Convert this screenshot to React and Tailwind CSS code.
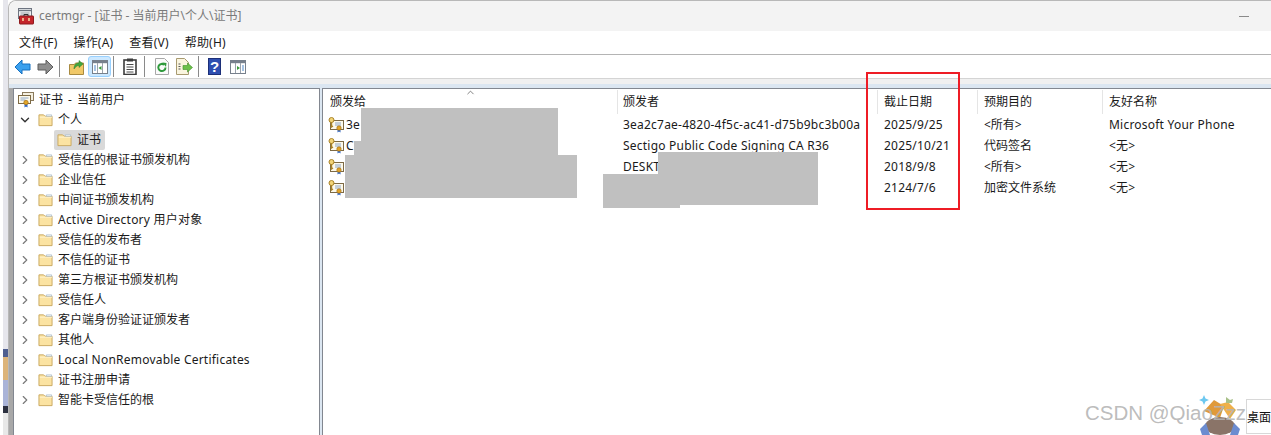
import React from 'react';
import { ChevronDown, ChevronRight, ChevronUp } from 'lucide-react';

const treeItems = [
  '受信任的根证书颁发机构',
  '企业信任',
  '中间证书颁发机构',
  'Active Directory 用户对象',
  '受信任的发布者',
  '不信任的证书',
  '第三方根证书颁发机构',
  '受信任人',
  '客户端身份验证证颁发者',
  '其他人',
  'Local NonRemovable Certificates',
  '证书注册申请',
  '智能卡受信任的根',
];

const rows = [
  { to: '3e', from: '3ea2c7ae-4820-4f5c-ac41-d75b9bc3b00a', date: '2025/9/25', purpose: '<所有>', name: 'Microsoft Your Phone' },
  { to: 'C', from: 'Sectigo Public Code Signing CA R36', date: '2025/10/21', purpose: '代码签名', name: '<无>' },
  { to: '', from: 'DESKT', date: '2018/9/8', purpose: '<所有>', name: '<无>' },
  { to: '', from: '', date: '2124/7/6', purpose: '加密文件系统', name: '<无>' },
];

const FolderIcon = () => (
  <svg width="15" height="14" viewBox="0 0 16 14" className="shrink-0">
    <path d="M1 1.5h5l1.5 1.5H15v10H1z" fill="#fbe3a2" stroke="#c9a860" />
    <path d="M2 4h13" stroke="#fff3cf" />
    <path d="M9 1.5h5.5V3H9z" fill="#fff" stroke="#9fb6c8" strokeWidth="0.7" />
  </svg>
);

const CertIcon = () => (
  <svg width="16" height="16" viewBox="0 0 16 16" className="shrink-0">
    <rect x="2.5" y="3.5" width="13" height="9" fill="#fdf9ea" stroke="#7d6a45" />
    <path d="M7 6h6M7 8h6M9 10h4" stroke="#8ca6c8" />
    <circle cx="3.5" cy="3" r="2.5" fill="#f2d477" stroke="#a98328" />
    <path d="M3.5 5v5l1.5-1" fill="none" stroke="#a98328" strokeWidth="1.4" />
    <path d="M9.5 12.5v3l1.5-1 1.500 1v-3" fill="#2f66c4" />
    <circle cx="11" cy="11" r="2.2" fill="#e2a526" stroke="#a8731a" strokeWidth="0.7" />
  </svg>
);

const StoreIcon = () => (
  <svg width="16" height="16" viewBox="0 0 16 16" className="shrink-0">
    <rect x="4.5" y="0.5" width="11" height="8" fill="#f4efe0" stroke="#8a7a5c" />
    <rect x="0.5" y="3.5" width="12" height="8" fill="#fdf9ea" stroke="#7d6a45" />
    <path d="M2.500 6h8M2.500 8h5" stroke="#8ca6c8" />
    <path d="M6.500 12v3.500l1.500-1 1.500 1V12" fill="#2f66c4" />
    <circle cx="8" cy="10.500" r="2.200" fill="#e2a526" stroke="#a8731a" strokeWidth="0.7" />
  </svg>
);

const ToolkitIcon = () => (
  <svg width="16" height="17" viewBox="0 0 16 17" className="shrink-0">
    <rect x="0.5" y="0.5" width="13" height="10" fill="#eef0f2" stroke="#6d7480" />
    <path d="M1 2.500h12" stroke="#6d7480" strokeWidth="1.4" />
    <path d="M2.500 5h9M2.500 7h9" stroke="#9aa0a8" />
    <rect x="1.500" y="8" width="14" height="8" rx="0.5" fill="#c4252b" stroke="#8f1a1e" />
    <path d="M6 8V6.500h4V8" fill="none" stroke="#333" />
    <path d="M5 10v3M11 10v3" stroke="#f5d0a0" strokeWidth="1.6" />
  </svg>
);

const Sep = () => <div className="h-[21px] w-px bg-[#8a8a8a]" />;

const ArrowIcon = ({ fill, stroke, flip }) => (
  <svg width="17" height="16" viewBox="0 0 17 16" className={flip ? 'shrink-0 -scale-x-100' : 'shrink-0'}>
    <path d="M8 1L1 8l7 7v-4h8V5H8z" fill={fill} stroke={stroke} />
  </svg>
);

const WindowIcon = ({ dark }) => (
  <svg width="16" height="14" viewBox="0 0 16 14" className="shrink-0">
    <rect x="0.5" y="0.5" width="15" height="13" fill="#fff" stroke="#77808c" />
    <path d="M1 2h14" stroke="#77808c" strokeWidth="2.4" />
    <path d="M5.500 3v10M10.500 3v10" stroke="#9aa2ac" />
    {dark ? (
      <>
        <path d="M7 6v4l3-2z" fill="#3a9a3a" />
        <path d="M12 6h2M12 8h2M12 10h2" stroke="#4c88c8" />
      </>
    ) : (
      <>
        <path d="M2 6h2M2 8h2M2 10h2" stroke="#4c88c8" />
        <path d="M9.500 6v4l-3-2z" fill="#3a9a3a" />
      </>
    )}
  </svg>
);

const Toolbar = () => (
  <div className="flex h-[23px] shrink-0 items-center bg-white">
    <div className="ml-[5px] flex w-[17px]"><ArrowIcon fill="#3aa0ee" stroke="#1670c0" /></div>
    <div className="ml-[6px] flex w-[17px]"><ArrowIcon fill="#8e8e8e" stroke="#5c5c5c" flip /></div>
    <div className="ml-[5px]"><Sep /></div>
    <svg width="15" height="16" viewBox="0 0 15 16" className="ml-[9px] shrink-0">
      <path d="M0.500 5.500h5l1-1.500h8v11.500h-14z" fill="#f0c868" stroke="#a88a40" />
      <path d="M5 10c0-4 2-6 5-6V1.500L14 5l-4 3.500V6.500c-2 0-3.500 1.500-5 3.500z" fill="#3fa83f" stroke="#2a7a2a" strokeWidth="0.5" />
    </svg>
    <div className="ml-[4px] flex h-[21px] w-[23px] items-center justify-center rounded-[3px] border border-[#99d1ff] bg-[#cce8ff]">
      <WindowIcon />
    </div>
    <div className="ml-[2px]"><Sep /></div>
    <svg width="14" height="17" viewBox="0 0 14 17" className="ml-[9px] shrink-0">
      <rect x="1" y="2" width="12" height="14.500" fill="#fff" stroke="#3c3c3c" strokeWidth="1.600" />
      <rect x="4" y="0.500" width="6" height="3" fill="#3c3c3c" />
      <path d="M3.500 6.500h7M3.500 9h7M3.500 11.500h7M3.500 14h7" stroke="#4c4c4c" />
    </svg>
    <div className="ml-[7px]"><Sep /></div>
    <svg width="14" height="17" viewBox="0 0 14 17" className="ml-[10px] shrink-0">
      <path d="M0.500 0.500h9l4 4v12h-13z" fill="#fbfbfb" stroke="#a8a8a8" />
      <path d="M10.500 9.500a3.600 3.600 0 1 1-1.200-2.700" fill="none" stroke="#2f9a3c" strokeWidth="2" />
      <path d="M7.500 4.500l4 .5-.5 4z" fill="#2f9a3c" />
    </svg>
    <svg width="17" height="17" viewBox="0 0 17 17" className="ml-[7px] shrink-0">
      <path d="M0.500 0.500h8l4 4v12h-12z" fill="#faf5df" stroke="#a89a70" />
      <path d="M2.500 6h2M2.500 8.500h2M2.500 11h2" stroke="#555" />
      <path d="M7 7.500h4.500V5l5 4.500-5 4.500v-2.500H7z" fill="#6cc04a" stroke="#3f8f2a" strokeWidth="0.600" />
    </svg>
    <div className="ml-[5px]"><Sep /></div>
    <div className="ml-[9px] flex h-[17px] w-[13px] items-center justify-center border border-[#1c2f78] bg-[#2f4fb0] font-['Liberation_Sans',sans-serif] text-[15px] leading-none font-bold text-white">?</div>
    <div className="ml-[9px]"><WindowIcon dark /></div>
  </div>
);

const TreeRow = ({ label }) => (
  <div className="flex h-5 items-center pl-[4px]">
    <ChevronRight size={14} strokeWidth={2} className="shrink-0 text-[#7a7a7a]" />
    <div className="ml-[6px]"><FolderIcon /></div>
    <span className={`ml-[5px] whitespace-nowrap ${/[A-Za-z]/.test(label) ? 'tracking-[0.22px]' : ''}`}>{label}</span>
  </div>
);

const Tree = () => (
  <div className="h-full w-[307px] shrink-0 border-t border-r border-l border-[#828790] bg-white pt-px">
    <div className="flex h-5 items-center pl-[4px]">
      <StoreIcon />
      <span className="ml-[5px] [word-spacing:2px]">证书 - 当前用户</span>
    </div>
    <div className="flex h-5 items-center pl-[4px]">
      <ChevronDown size={14} strokeWidth={2.4} className="shrink-0 text-[#333]" />
      <div className="ml-[6px]"><FolderIcon /></div>
      <span className="ml-[5px]">个人</span>
    </div>
    <div className="flex h-5 items-center pl-[40px]">
      <div className="flex h-5 w-[51px] items-center rounded-[2px] bg-[#d9d9d9] pl-[3px]">
        <FolderIcon />
        <span className="ml-[5px]">证书</span>
      </div>
    </div>
    {treeItems.map((label) => <TreeRow key={label} label={label} />)}
  </div>
);

const columns = ['w-[294px]', 'w-[260px]', 'w-[100px]', 'w-[125px]', 'flex-1'];
const headers = ['颁发给', '颁发者', '截止日期', '预期目的', '友好名称'];
const headerPad = ['pl-[7px]', 'border-l border-[#e5e5e5] pl-[5px]', 'border-l border-[#e5e5e5] pl-[6px]', 'border-l border-[#e5e5e5] pl-[6px]', 'border-l border-[#e5e5e5] pl-[6px]'];

const CertList = () => (
  <div className="relative h-full flex-1 border-t border-l border-[#828790] bg-white">
    <ChevronUp size={11} strokeWidth={1.6} className="absolute top-[-2px] left-[142px] text-[#555]" />
    <div className="flex h-[25px] pt-px">
      {headers.map((h, i) => (
        <div key={h} className={`${columns[i]} ${headerPad[i]} flex h-[24px] items-center`}>
          {h}
        </div>
      ))}
    </div>
    {rows.map((r, i) => (
      <div key={i} className="flex h-[21px] items-center">
        <div className={`${columns[0]} flex items-center pl-[5px]`}>
          <CertIcon />
          <span className="ml-[2px] tracking-[0.22px]">{r.to}</span>
        </div>
        <div className={`${columns[1]} pl-[6px] tracking-[0.22px] whitespace-nowrap`}>{r.from}</div>
        <div className={`${columns[2]} pl-[7px] tracking-[0.22px]`}>{r.date}</div>
        <div className={`${columns[3]} pl-[7px]`}>{r.purpose}</div>
        <div className={`${columns[4]} pl-[7px] tracking-[0.22px]`}>{r.name}</div>
      </div>
    ))}
  </div>
);

export default function App() {
  return (
    <div className="relative flex h-[435px] w-[1271px] overflow-hidden bg-white font-['Noto_Sans','Noto_Sans_CJK_SC',sans-serif] text-[12px] text-[#1a1a1a]">
      {/* bit of the desktop showing left of the window */}
      <div className="flex w-2 shrink-0 flex-col pl-[3px]">
        <div className="h-[349px] bg-[#e6e6ec]" />
        <div className="h-2 bg-[#4f5f90]" />
        <div className="h-[23px] bg-[#dcb47a]" />
        <div className="h-[26px] bg-[#aab4d8]" />
        <div className="h-[7px] bg-[#2c3040]" />
        <div className="flex-1 bg-[#e8e8e8]" />
      </div>

      <div className="flex min-w-0 flex-1 flex-col rounded-tl-lg border-t border-l border-[#b8b8b8]">
        <div className="flex h-[30px] shrink-0 items-center rounded-tl-lg bg-[#f3f3f3] pl-[9px] text-[#7a7a7a]">
          <ToolkitIcon />
          <span className="ml-[5px]">certmgr - [证书 - 当前用户\个人\证书]</span>
          <div className="mr-[22px] ml-auto h-px w-[10px] bg-[#8a8a8a]" />
        </div>
        <div className="flex h-[24px] shrink-0 items-center gap-[16px] border-b border-[#b4b4b4] bg-white pl-[10px] tracking-[0.2px]">
          <span>文件(F)</span>
          <span>操作(A)</span>
          <span>查看(V)</span>
          <span>帮助(H)</span>
        </div>
        <Toolbar />
        <div className="h-[6px] shrink-0 border-t border-[#d4d4d4] bg-[#f0f0f0]" />
        <div className="h-1 shrink-0 bg-[#dbe6f1]" />
        <div className="flex min-h-0 flex-1 bg-[#dbe6f1]">
          <div className="h-full w-1 shrink-0 bg-[#a8a8a8]" />
          <Tree />
          <div className="w-[2px] shrink-0" />
          <CertList />
        </div>
      </div>

      {/* redaction blocks pasted over the screenshot */}
      <div className="absolute top-[108px] left-[361px] h-[48px] w-[197px] bg-[#c0c0c0]" />
      <div className="absolute top-[141px] left-[354px] h-[15px] w-[10px] bg-[#c0c0c0]" />
      <div className="absolute top-[155px] left-[345px] h-[43px] w-[232px] bg-[#c0c0c0]" />
      <div className="absolute top-[152px] left-[658px] h-[53px] w-[160px] bg-[#c0c0c0]" />
      <div className="absolute top-[174px] left-[603px] h-[34px] w-[77px] bg-[#c0c0c0]" />

      {/* red annotation box */}
      <div className="absolute top-[72px] left-[866px] h-[138px] w-[94px] border-2 border-[#ee1c25]" />

      {/* csdn watermark */}
      <svg width="50" height="42" viewBox="0 0 50 42" className="absolute top-[393px] left-[1196px]">
        <path d="M8 2l1.500 3.500L13 7l-3.500 1.500L8 12 6.500 8.500 3 7l3.500-1.500z" fill="#6cc8f0" />
        <path d="M8 18l10-11 10 6-4 12z" fill="#e09a3a" />
        <path d="M24 11l8-2 8 8-6 9z" fill="#efb04a" />
        <path d="M30 4l4 3 3-1-1 4h-6z" fill="#a8c088" />
        <ellipse cx="24" cy="33" rx="15" ry="9" fill="#8a7468" />
        <path d="M4 36l6-6 4 12H6zM44 36l-6-6-4 12h8z" fill="#6c8cd0" />
      </svg>
      <span className="absolute top-[400px] left-[1085px] font-['Liberation_Sans',sans-serif] text-[20.5px] leading-[26px] whitespace-nowrap text-[#b4b4b4]/90">CSDN @QiaoZzz</span>
      <div className="absolute top-[399px] left-[1246px] h-[35px] w-[25px] border-t border-b border-l border-[#d8d8d8] pt-[9px] text-[12px] leading-[17px] whitespace-nowrap text-[#111]">桌面</div>
    </div>
  );
}
